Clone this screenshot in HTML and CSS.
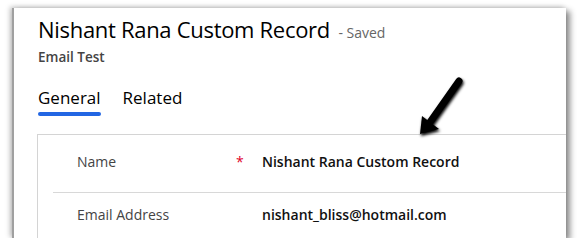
FILE: index.html
```html
<!DOCTYPE html>
<html lang="en">
<head>
  <meta charset="UTF-8">
  <title>Nishant Rana Custom Record</title>
  <link rel="stylesheet" href="styles.css">
</head>
<body>

  <div class="frame">
    <!-- Cabecalho do registro -->
    <div class="header">
      <h1 class="title">Nishant Rana Custom Record <span class="status">- Saved</span></h1>
      <div class="subtitle">Email Test</div>
    </div>

    <ul class="tabs">
      <li class="tab active">General</li>
      <li class="tab">Related</li>
    </ul>

    <div class="card">
      <div class="row">
        <div class="label">Name</div>
        <div class="required">*</div>
        <div class="value">Nishant Rana Custom Record</div>
      </div>
      <div class="row">
        <div class="label">Email Address</div>
        <div class="required"></div>
        <div class="value">nishant_bliss@hotmail.com</div>
      </div>
    </div>

    <!-- Seta de anotacao por cima do formulario -->
    <svg class="arrow" width="60" height="72" viewBox="0 0 60 72">
      <defs>
        <filter id="sombra" x="-30%" y="-30%" width="160%" height="160%">
          <feGaussianBlur in="SourceAlpha" stdDeviation="1.5"/>
          <feOffset dx="1" dy="2" result="blur"/>
          <feMerge>
            <feMergeNode in="blur"/>
            <feMergeNode in="SourceGraphic"/>
          </feMerge>
        </filter>
      </defs>
      <g filter="url(#sombra)">
        <line x1="45" y1="9" x2="14" y2="53" stroke="#000" stroke-width="7" stroke-linecap="round"/>
        <polygon points="6,62 8,44 25,57" fill="#000"/>
      </g>
    </svg>
  </div>

</body>
</html>
```

FILE: styles.css
```css
body {
  margin: 0;
  background: #fff;
  font-family: "Open Sans", "Noto Sans", sans-serif;
  color: #000;
}

/* Moldura do print com sombra */
.frame {
  position: relative;
  margin: 8px 13px 0 12px;
  height: 230px;
  background: #fff;
  border-left: 2px solid #a0a0a0;
  box-shadow: 4px 3px 6px rgba(0, 0, 0, 0.45), -2px -1px 5px rgba(0, 0, 0, 0.25);
  overflow: hidden;
}

.header {
  padding: 6px 0 0 24px;
}

.title {
  margin: 0;
  font-size: 22px;
  font-weight: 400;
  line-height: 30px;
  letter-spacing: -0.3px;
}

.status {
  font-size: 14px;
  color: #666;
  margin-left: 3px;
  letter-spacing: 0;
}

.subtitle {
  font-size: 13.5px;
  font-weight: 600;
  color: #444;
  line-height: 18px;
}

.tabs {
  list-style: none;
  margin: 20px 0 0 24px;
  padding: 0;
  display: flex;
  gap: 22px;
}

.tab {
  font-size: 17px;
  line-height: 24px;
  padding-bottom: 6px;
  position: relative;
}

.tab.active::after {
  content: "";
  position: absolute;
  left: 0;
  right: 0;
  bottom: 0;
  height: 4px;
  border-radius: 2px;
  background: #2266e3;
}

/* Cartao com os campos */
.card {
  margin: 18px -40px 0 23px;
  border: 1px solid #d4d4d4;
  padding: 0 0 0 15px;
}

.row {
  display: flex;
  align-items: flex-start;
  height: 57px;
  padding-top: 17px;
  box-sizing: border-box;
  padding-left: 24px;
  font-size: 14px;
  line-height: 20px;
}

.row + .row {
  border-top: 1px solid #d8d8d8;
  padding-top: 12px;
}

.label {
  width: 159px;
  color: #444;
}

.required {
  width: 26px;
  color: #e0002a;
}

.value {
  font-weight: 600;
  color: #111;
}

.arrow {
  position: absolute;
  left: 400px;
  top: 64px;
}
```
